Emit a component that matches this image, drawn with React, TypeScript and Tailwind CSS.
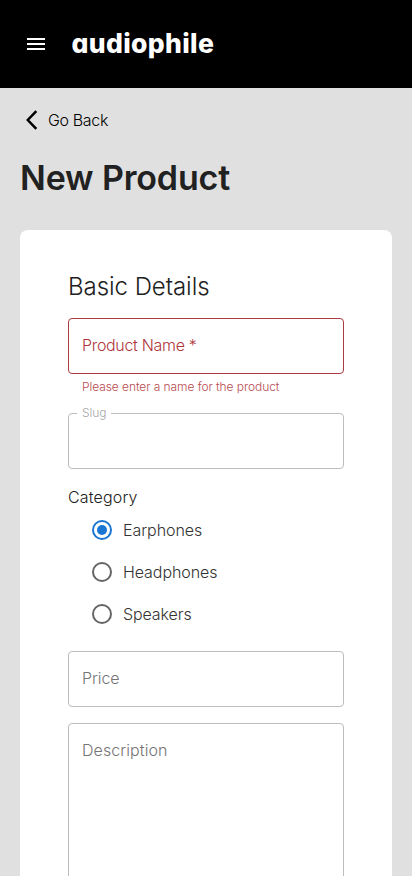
import type { ReactNode } from 'react';

function Header() {
  return (
    <header className="flex h-[88px] items-center bg-black pl-6 text-white">
      <svg className="size-6" viewBox="0 0 24 24" fill="currentColor" aria-label="Open menu">
        <path d="M3 18h18v-2H3v2zm0-5h18v-2H3v2zm0-7v2h18V6H3z" />
      </svg>
      <span className="ml-[23.5px] pb-0.5 text-[26.5px] leading-8 font-[850] tracking-[0.35px] [font-feature-settings:'cv11']">
        audiophile
      </span>
    </header>
  );
}

function Helper({ children }: { children: ReactNode }) {
  return <p className="mx-3.5 mt-[3px] text-xs leading-5 font-light tracking-[-0.07px] text-[#b84a4f]">{children}</p>;
}

function Radio({ label, checked = false, spacing }: { label: string; checked?: boolean; spacing: string }) {
  return (
    <label className={`flex h-[42px] items-center gap-[9px] pl-[22px] text-base font-light text-[#333333] ${spacing}`}>
      <svg className={checked ? 'size-6 text-[#1976d2]' : 'size-6 text-[#666666]'} viewBox="0 0 24 24">
        <circle cx="12" cy="12" r="9" fill="none" stroke="currentColor" strokeWidth="2" />
        {checked && <circle cx="12" cy="12" r="5" fill="currentColor" />}
      </svg>
      <span>{label}</span>
    </label>
  );
}

export default function App() {
  return (
    <div className="h-[876px] overflow-hidden bg-[#e0e0e0] font-['Inter',sans-serif]">
      <Header />
      <main className="px-5">
        <a className="flex h-16 items-center gap-2 text-base font-[350] tracking-[-0.35px] text-black">
          <svg className="ml-1 h-6 w-4" viewBox="0 0 16 24" fill="none" stroke="currentColor" strokeWidth="2.5">
            <path d="M12.3 3.2 3.8 12l8.5 8.8" />
          </svg>
          <span>Go Back</span>
        </a>
        <h1 className="h-[78px] text-[34px] leading-[51px] font-[560] tracking-[-0.15px] text-[#212121]">New Product</h1>
        <form className="h-[700px] rounded-lg bg-white px-12 pt-10">
          <h2 className="h-12 text-2xl leading-[34px] font-light tracking-[-0.05px] text-[#212121]">Basic Details</h2>
          <div className="flex h-14 items-center rounded border border-[#a83c41] px-[13px] pb-0.5 text-base font-light text-[#b0363c]">
            <span className="tracking-[-0.32px]">Product Name *</span>
          </div>
          <Helper>Please enter a name for the product</Helper>
          <fieldset className="mt-[9px] h-[63px] rounded border border-[#bdbdbd] px-2">
            <legend className="px-[5px] text-xs leading-[14px] font-light tracking-[-0.1px] text-[#a6a6a6]">Slug</legend>
          </fieldset>
          <h3 className="mt-4 h-6 text-base leading-6 font-[350] tracking-[0.15px] text-[#212121]">Category</h3>
          <Radio label="Earphones" checked spacing="tracking-[-0.05px]" />
          <Radio label="Headphones" spacing="tracking-[-0.08px]" />
          <Radio label="Speakers" spacing="tracking-[-0.1px]" />
          <div className="mt-4 flex h-14 items-center rounded border border-[#bdbdbd] px-[13px] pb-0.5 text-base font-light text-[#757575]">
            <span className="tracking-[-0.1px]">Price</span>
          </div>
          <div className="mt-4 h-[200px] rounded border border-[#bdbdbd] px-[13px] pt-[14px] text-base leading-6 font-light text-[#757575]">
            <span className="tracking-[0.08px]">Description</span>
          </div>
        </form>
      </main>
    </div>
  );
}
